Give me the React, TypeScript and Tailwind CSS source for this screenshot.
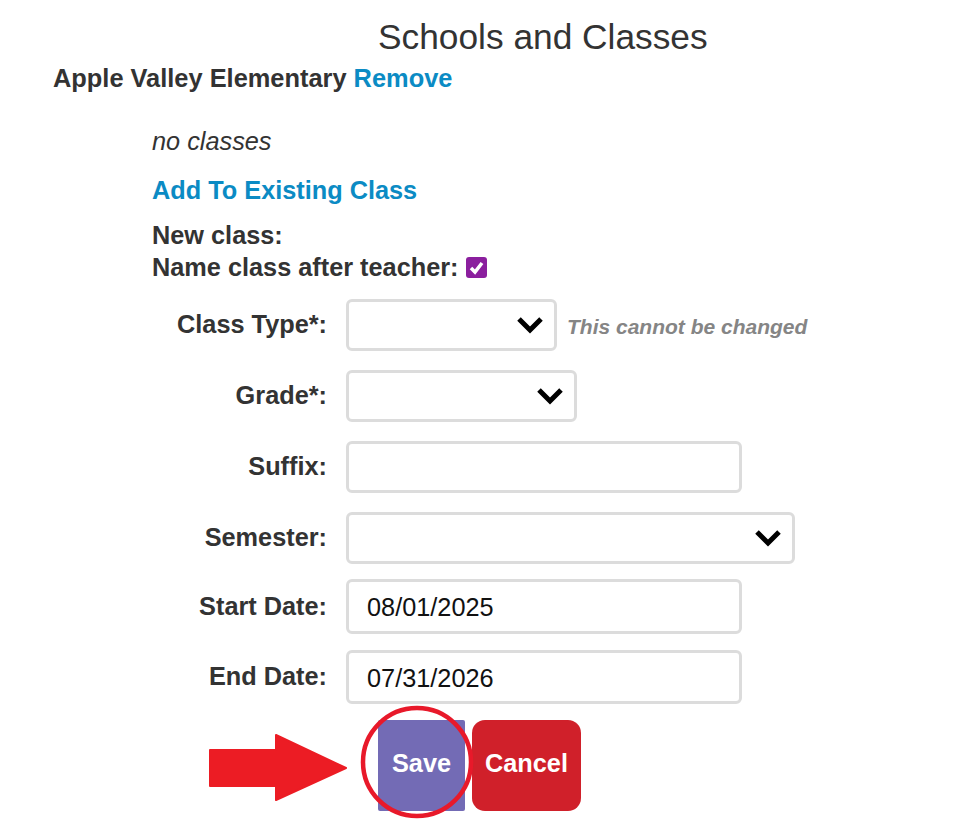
import React from "react";

const FONT = "font-['Liberation_Sans',Arial,sans-serif]";

function Chevron() {
  return (
    <svg width="28" height="18" viewBox="0 0 28 18" className="shrink-0">
      <polyline
        points="3,3 14,14 25,3"
        fill="none"
        stroke="#000"
        strokeWidth="5"
        strokeLinejoin="miter"
      />
    </svg>
  );
}

function SelectBox({ width }: { width: string }) {
  return (
    <div
      className={`${width} h-[52px] bg-white border-[3px] border-[#dcdcdc] rounded-[6px] flex items-center justify-end pr-[10px]`}
    >
      <Chevron />
    </div>
  );
}

function TextBox({ value, height }: { value?: string; height: string }) {
  return (
    <div
      className={`w-[396px] ${height} bg-white border-[3px] border-[#dcdcdc] rounded-[6px] flex items-center pl-[18px] pt-[3px] text-[25.3px] text-[#111]`}
    >
      {value}
    </div>
  );
}

function Row({
  label,
  className,
  children,
}: {
  label: string;
  className: string;
  children: React.ReactNode;
}) {
  return (
    <div className={`flex items-center ${className}`}>
      <div className="w-[175px] mr-[19px] text-right font-bold text-[25.3px] text-[#333]">
        {label}
      </div>
      {children}
    </div>
  );
}

export default function App() {
  return (
    <div className={`relative w-[955px] h-[819px] bg-white overflow-hidden ${FONT}`}>
      {/* Title */}
      <div className="pt-[17px] pl-[378px] text-[35.3px] leading-[40px] text-[#333]">
        Schools and Classes
      </div>

      {/* School */}
      <div className="mt-[6px] pl-[53px] text-[25.4px] leading-[30px] font-bold text-[#333]">
        Apple Valley Elementary <span className="text-[#0b8bc4]">Remove</span>
      </div>

      <div className="pl-[152px]">
        <div className="mt-[33px] text-[25.3px] leading-[30px] italic text-[#333]">
          no classes
        </div>
        <div className="mt-[19px] text-[25.3px] leading-[30px] font-bold text-[#0b8bc4]">
          Add To Existing Class
        </div>
        <div className="mt-[15px] text-[25.3px] leading-[30px] font-bold text-[#333]">
          New class:
        </div>
        <div className="mt-[2px] flex items-center gap-[7px] text-[25.3px] leading-[30px] font-bold text-[#333]">
          Name class after teacher:
          <span className="w-[21px] h-[21px] rounded-[3px] bg-[#8b1f9e] flex items-center justify-center">
            <svg width="15" height="15" viewBox="0 0 15 15">
              <polyline
                points="2,8 6,12 13,3"
                fill="none"
                stroke="#fff"
                strokeWidth="3.5"
              />
            </svg>
          </span>
        </div>

        {/* Form rows */}
        <Row label="Class Type*:" className="mt-[17px]">
          <SelectBox width="w-[211px]" />
          <span className="ml-[10px] pt-[3px] text-[21px] font-bold italic text-[#858585]">
            This cannot be changed
          </span>
        </Row>
        <Row label="Grade*:" className="mt-[19px]">
          <SelectBox width="w-[231px]" />
        </Row>
        <Row label="Suffix:" className="mt-[19px]">
          <TextBox height="h-[52px]" />
        </Row>
        <Row label="Semester:" className="mt-[19px]">
          <SelectBox width="w-[449px]" />
        </Row>
        <Row label="Start Date:" className="mt-[15px]">
          <TextBox value="08/01/2025" height="h-[55px]" />
        </Row>
        <Row label="End Date:" className="mt-[16px]">
          <TextBox value="07/31/2026" height="h-[54px]" />
        </Row>

        {/* Buttons */}
        <div className="mt-[16px] ml-[226px] flex gap-[7px]">
          <button className="h-[91px] w-[87px] pb-[3px] bg-[#736bb5] text-white font-bold text-[25.3px] rounded-[2px]">
            Save
          </button>
          <button className="h-[91px] w-[109px] pb-[3px] bg-[#d0202a] text-white font-bold text-[25.3px] rounded-[13px]">
            Cancel
          </button>
        </div>
      </div>

      {/* Annotation overlay: arrow and circle */}
      <svg
        className="absolute left-0 top-0 pointer-events-none"
        width="955"
        height="819"
        viewBox="0 0 955 819"
      >
        <polygon
          points="210,750 276,750 276,735 346,768 276,800 276,786 210,786"
          fill="#ec1c24"
          stroke="#ec1c24"
          strokeWidth="2"
          strokeLinejoin="round"
        />
        <ellipse
          cx="417"
          cy="762"
          rx="54"
          ry="54"
          fill="none"
          stroke="#e8192a"
          strokeWidth="4.5"
        />
      </svg>
    </div>
  );
}
